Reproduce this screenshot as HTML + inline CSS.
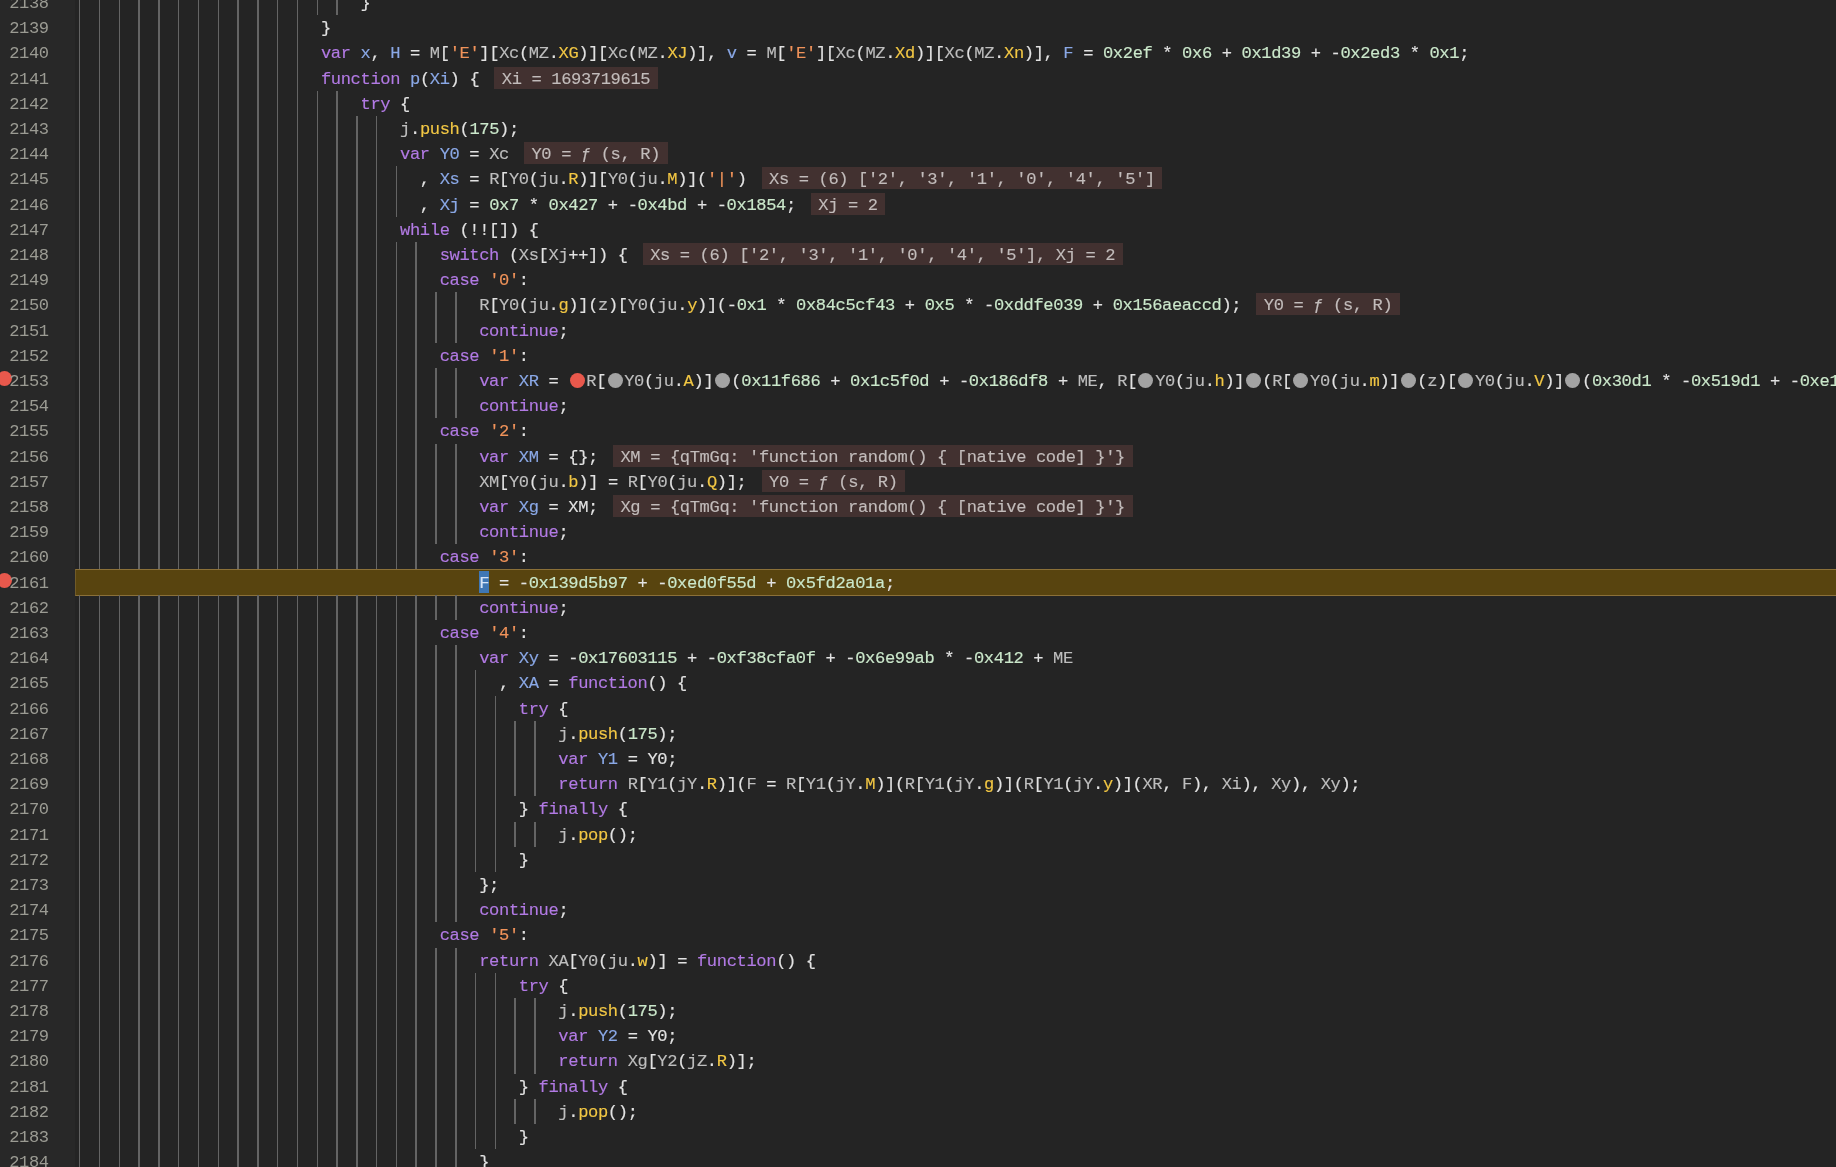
<!DOCTYPE html>
<html lang="en"><head><meta charset="utf-8"><title>Sources</title>
<style>
html,body{margin:0;padding:0;background:#242424;}
body{width:1836px;height:1167px;overflow:hidden;position:relative;font-family:"Liberation Mono", "DejaVu Sans Mono", monospace;font-size:17.1px;letter-spacing:-0.3652px;color:#e2e2e2;font-variant-ligatures:none;-webkit-text-stroke:0.15px;}
#gut{position:absolute;left:0;top:0;width:75px;height:1167px;background:#282828;}
.l{position:absolute;left:0;width:1836px;height:26px;line-height:25px;white-space:pre;}
.no{position:absolute;left:0;top:1px;width:48.765px;text-align:right;color:#9b9b93;-webkit-text-stroke:0;}
.c{position:absolute;left:83.5px;top:1px;}
#code{position:absolute;left:0;top:0;width:1836px;height:1167px;will-change:transform;}
.g{position:absolute;top:0;width:1px;height:100%;background:#646464;}
.g.b{width:2px;}
.v{color:#bebebe;} .k{color:#b27ae4;} .d{color:#8aa8e6;} .s{color:#f0935a;} .p{color:#f2c744;} .n{color:#cbe8cb;}
.w{margin-left:15px;padding:3px 7.5px 0;background:#423130;color:#c2bcbb;}
.bp{display:inline-block;width:15px;height:15px;border-radius:50%;background:#a3a3a3;margin:0 1.67px 0 1.4px;vertical-align:middle;position:relative;top:-0.7px;letter-spacing:0;}
.bp.r{background:#e8584c;}
.gbp{position:absolute;left:-3px;width:15px;height:15px;border-radius:50%;background:#e8584c;}
#hl{position:absolute;left:75px;right:0;background:#58440f;border-top:1px solid #8b7038;border-bottom:1px solid #8b7038;border-left:1px solid #705a28;box-sizing:border-box;}
.tk{background:#3f77b5;color:#d6e4f7;padding:3px 0 0;}
</style></head>
<body>
<div id="gut"></div>
<div id="code">
<div class="l" style="top:-10px;height:25px"><i class="g" style="left:79px"></i><i class="g" style="left:99px"></i><i class="g" style="left:119px"></i><i class="g b" style="left:138px"></i><i class="g b" style="left:158px"></i><i class="g" style="left:178px"></i><i class="g" style="left:198px"></i><i class="g" style="left:218px"></i><i class="g b" style="left:237px"></i><i class="g b" style="left:257px"></i><i class="g" style="left:277px"></i><i class="g" style="left:297px"></i><i class="g" style="left:317px"></i><i class="g b" style="left:336px"></i><span class="no">2138</span><span class="c">                            }</span></div>
<div class="l" style="top:15px;height:25px"><i class="g" style="left:79px"></i><i class="g" style="left:99px"></i><i class="g" style="left:119px"></i><i class="g b" style="left:138px"></i><i class="g b" style="left:158px"></i><i class="g" style="left:178px"></i><i class="g" style="left:198px"></i><i class="g" style="left:218px"></i><i class="g b" style="left:237px"></i><i class="g b" style="left:257px"></i><i class="g" style="left:277px"></i><i class="g" style="left:297px"></i><span class="no">2139</span><span class="c">                        }</span></div>
<div class="l" style="top:40px;height:26px"><i class="g" style="left:79px"></i><i class="g" style="left:99px"></i><i class="g" style="left:119px"></i><i class="g b" style="left:138px"></i><i class="g b" style="left:158px"></i><i class="g" style="left:178px"></i><i class="g" style="left:198px"></i><i class="g" style="left:218px"></i><i class="g b" style="left:237px"></i><i class="g b" style="left:257px"></i><i class="g" style="left:277px"></i><i class="g" style="left:297px"></i><span class="no">2140</span><span class="c">                        <span class="k">var</span> <span class="d">x</span>, <span class="d">H</span> = <span class="v">M</span>[<span class="s">'E'</span>][<span class="v">Xc</span>(<span class="v">MZ</span>.<span class="p">XG</span>)][<span class="v">Xc</span>(<span class="v">MZ</span>.<span class="p">XJ</span>)], <span class="d">v</span> = <span class="v">M</span>[<span class="s">'E'</span>][<span class="v">Xc</span>(<span class="v">MZ</span>.<span class="p">Xd</span>)][<span class="v">Xc</span>(<span class="v">MZ</span>.<span class="p">Xn</span>)], <span class="d">F</span> = <span class="n">0x2ef</span> * <span class="n">0x6</span> + <span class="n">0x1d39</span> + -<span class="n">0x2ed3</span> * <span class="n">0x1</span>;</span></div>
<div class="l" style="top:66px;height:25px"><i class="g" style="left:79px"></i><i class="g" style="left:99px"></i><i class="g" style="left:119px"></i><i class="g b" style="left:138px"></i><i class="g b" style="left:158px"></i><i class="g" style="left:178px"></i><i class="g" style="left:198px"></i><i class="g" style="left:218px"></i><i class="g b" style="left:237px"></i><i class="g b" style="left:257px"></i><i class="g" style="left:277px"></i><i class="g" style="left:297px"></i><span class="no">2141</span><span class="c">                        <span class="k">function</span> <span class="d">p</span>(<span class="d">Xi</span>) {<span class="w">Xi = 1693719615</span></span></div>
<div class="l" style="top:91px;height:25px"><i class="g" style="left:79px"></i><i class="g" style="left:99px"></i><i class="g" style="left:119px"></i><i class="g b" style="left:138px"></i><i class="g b" style="left:158px"></i><i class="g" style="left:178px"></i><i class="g" style="left:198px"></i><i class="g" style="left:218px"></i><i class="g b" style="left:237px"></i><i class="g b" style="left:257px"></i><i class="g" style="left:277px"></i><i class="g" style="left:297px"></i><i class="g" style="left:317px"></i><i class="g b" style="left:336px"></i><span class="no">2142</span><span class="c">                            <span class="k">try</span> {</span></div>
<div class="l" style="top:116px;height:25px"><i class="g" style="left:79px"></i><i class="g" style="left:99px"></i><i class="g" style="left:119px"></i><i class="g b" style="left:138px"></i><i class="g b" style="left:158px"></i><i class="g" style="left:178px"></i><i class="g" style="left:198px"></i><i class="g" style="left:218px"></i><i class="g b" style="left:237px"></i><i class="g b" style="left:257px"></i><i class="g" style="left:277px"></i><i class="g" style="left:297px"></i><i class="g" style="left:317px"></i><i class="g b" style="left:336px"></i><i class="g b" style="left:356px"></i><i class="g" style="left:376px"></i><span class="no">2143</span><span class="c">                                <span class="v">j</span>.<span class="p">push</span>(<span class="n">175</span>);</span></div>
<div class="l" style="top:141px;height:25px"><i class="g" style="left:79px"></i><i class="g" style="left:99px"></i><i class="g" style="left:119px"></i><i class="g b" style="left:138px"></i><i class="g b" style="left:158px"></i><i class="g" style="left:178px"></i><i class="g" style="left:198px"></i><i class="g" style="left:218px"></i><i class="g b" style="left:237px"></i><i class="g b" style="left:257px"></i><i class="g" style="left:277px"></i><i class="g" style="left:297px"></i><i class="g" style="left:317px"></i><i class="g b" style="left:336px"></i><i class="g b" style="left:356px"></i><i class="g" style="left:376px"></i><span class="no">2144</span><span class="c">                                <span class="k">var</span> <span class="d">Y0</span> = <span class="v">Xc</span><span class="w">Y0 = ƒ (s, R)</span></span></div>
<div class="l" style="top:166px;height:26px"><i class="g" style="left:79px"></i><i class="g" style="left:99px"></i><i class="g" style="left:119px"></i><i class="g b" style="left:138px"></i><i class="g b" style="left:158px"></i><i class="g" style="left:178px"></i><i class="g" style="left:198px"></i><i class="g" style="left:218px"></i><i class="g b" style="left:237px"></i><i class="g b" style="left:257px"></i><i class="g" style="left:277px"></i><i class="g" style="left:297px"></i><i class="g" style="left:317px"></i><i class="g b" style="left:336px"></i><i class="g b" style="left:356px"></i><i class="g" style="left:376px"></i><i class="g" style="left:396px"></i><span class="no">2145</span><span class="c">                                  , <span class="d">Xs</span> = <span class="v">R</span>[<span class="v">Y0</span>(<span class="v">ju</span>.<span class="p">R</span>)][<span class="v">Y0</span>(<span class="v">ju</span>.<span class="p">M</span>)](<span class="s">'|'</span>)<span class="w">Xs = (6) ['2', '3', '1', '0', '4', '5']</span></span></div>
<div class="l" style="top:192px;height:25px"><i class="g" style="left:79px"></i><i class="g" style="left:99px"></i><i class="g" style="left:119px"></i><i class="g b" style="left:138px"></i><i class="g b" style="left:158px"></i><i class="g" style="left:178px"></i><i class="g" style="left:198px"></i><i class="g" style="left:218px"></i><i class="g b" style="left:237px"></i><i class="g b" style="left:257px"></i><i class="g" style="left:277px"></i><i class="g" style="left:297px"></i><i class="g" style="left:317px"></i><i class="g b" style="left:336px"></i><i class="g b" style="left:356px"></i><i class="g" style="left:376px"></i><i class="g" style="left:396px"></i><span class="no">2146</span><span class="c">                                  , <span class="d">Xj</span> = <span class="n">0x7</span> * <span class="n">0x427</span> + -<span class="n">0x4bd</span> + -<span class="n">0x1854</span>;<span class="w">Xj = 2</span></span></div>
<div class="l" style="top:217px;height:25px"><i class="g" style="left:79px"></i><i class="g" style="left:99px"></i><i class="g" style="left:119px"></i><i class="g b" style="left:138px"></i><i class="g b" style="left:158px"></i><i class="g" style="left:178px"></i><i class="g" style="left:198px"></i><i class="g" style="left:218px"></i><i class="g b" style="left:237px"></i><i class="g b" style="left:257px"></i><i class="g" style="left:277px"></i><i class="g" style="left:297px"></i><i class="g" style="left:317px"></i><i class="g b" style="left:336px"></i><i class="g b" style="left:356px"></i><i class="g" style="left:376px"></i><span class="no">2147</span><span class="c">                                <span class="k">while</span> (!![]) {</span></div>
<div class="l" style="top:242px;height:25px"><i class="g" style="left:79px"></i><i class="g" style="left:99px"></i><i class="g" style="left:119px"></i><i class="g b" style="left:138px"></i><i class="g b" style="left:158px"></i><i class="g" style="left:178px"></i><i class="g" style="left:198px"></i><i class="g" style="left:218px"></i><i class="g b" style="left:237px"></i><i class="g b" style="left:257px"></i><i class="g" style="left:277px"></i><i class="g" style="left:297px"></i><i class="g" style="left:317px"></i><i class="g b" style="left:336px"></i><i class="g b" style="left:356px"></i><i class="g" style="left:376px"></i><i class="g" style="left:396px"></i><i class="g b" style="left:415px"></i><span class="no">2148</span><span class="c">                                    <span class="k">switch</span> (<span class="v">Xs</span>[<span class="v">Xj</span>++]) {<span class="w">Xs = (6) ['2', '3', '1', '0', '4', '5'], Xj = 2</span></span></div>
<div class="l" style="top:267px;height:25px"><i class="g" style="left:79px"></i><i class="g" style="left:99px"></i><i class="g" style="left:119px"></i><i class="g b" style="left:138px"></i><i class="g b" style="left:158px"></i><i class="g" style="left:178px"></i><i class="g" style="left:198px"></i><i class="g" style="left:218px"></i><i class="g b" style="left:237px"></i><i class="g b" style="left:257px"></i><i class="g" style="left:277px"></i><i class="g" style="left:297px"></i><i class="g" style="left:317px"></i><i class="g b" style="left:336px"></i><i class="g b" style="left:356px"></i><i class="g" style="left:376px"></i><i class="g" style="left:396px"></i><i class="g b" style="left:415px"></i><span class="no">2149</span><span class="c">                                    <span class="k">case</span> <span class="s">'0'</span>:</span></div>
<div class="l" style="top:292px;height:26px"><i class="g" style="left:79px"></i><i class="g" style="left:99px"></i><i class="g" style="left:119px"></i><i class="g b" style="left:138px"></i><i class="g b" style="left:158px"></i><i class="g" style="left:178px"></i><i class="g" style="left:198px"></i><i class="g" style="left:218px"></i><i class="g b" style="left:237px"></i><i class="g b" style="left:257px"></i><i class="g" style="left:277px"></i><i class="g" style="left:297px"></i><i class="g" style="left:317px"></i><i class="g b" style="left:336px"></i><i class="g b" style="left:356px"></i><i class="g" style="left:376px"></i><i class="g" style="left:396px"></i><i class="g b" style="left:415px"></i><i class="g b" style="left:435px"></i><i class="g b" style="left:455px"></i><span class="no">2150</span><span class="c">                                        <span class="v">R</span>[<span class="v">Y0</span>(<span class="v">ju</span>.<span class="p">g</span>)](<span class="v">z</span>)[<span class="v">Y0</span>(<span class="v">ju</span>.<span class="p">y</span>)](-<span class="n">0x1</span> * <span class="n">0x84c5cf43</span> + <span class="n">0x5</span> * -<span class="n">0xddfe039</span> + <span class="n">0x156aeaccd</span>);<span class="w">Y0 = ƒ (s, R)</span></span></div>
<div class="l" style="top:318px;height:25px"><i class="g" style="left:79px"></i><i class="g" style="left:99px"></i><i class="g" style="left:119px"></i><i class="g b" style="left:138px"></i><i class="g b" style="left:158px"></i><i class="g" style="left:178px"></i><i class="g" style="left:198px"></i><i class="g" style="left:218px"></i><i class="g b" style="left:237px"></i><i class="g b" style="left:257px"></i><i class="g" style="left:277px"></i><i class="g" style="left:297px"></i><i class="g" style="left:317px"></i><i class="g b" style="left:336px"></i><i class="g b" style="left:356px"></i><i class="g" style="left:376px"></i><i class="g" style="left:396px"></i><i class="g b" style="left:415px"></i><i class="g b" style="left:435px"></i><i class="g b" style="left:455px"></i><span class="no">2151</span><span class="c">                                        <span class="k">continue</span>;</span></div>
<div class="l" style="top:343px;height:25px"><i class="g" style="left:79px"></i><i class="g" style="left:99px"></i><i class="g" style="left:119px"></i><i class="g b" style="left:138px"></i><i class="g b" style="left:158px"></i><i class="g" style="left:178px"></i><i class="g" style="left:198px"></i><i class="g" style="left:218px"></i><i class="g b" style="left:237px"></i><i class="g b" style="left:257px"></i><i class="g" style="left:277px"></i><i class="g" style="left:297px"></i><i class="g" style="left:317px"></i><i class="g b" style="left:336px"></i><i class="g b" style="left:356px"></i><i class="g" style="left:376px"></i><i class="g" style="left:396px"></i><i class="g b" style="left:415px"></i><span class="no">2152</span><span class="c">                                    <span class="k">case</span> <span class="s">'1'</span>:</span></div>
<div class="l" style="top:368px;height:25px"><i class="g" style="left:79px"></i><i class="g" style="left:99px"></i><i class="g" style="left:119px"></i><i class="g b" style="left:138px"></i><i class="g b" style="left:158px"></i><i class="g" style="left:178px"></i><i class="g" style="left:198px"></i><i class="g" style="left:218px"></i><i class="g b" style="left:237px"></i><i class="g b" style="left:257px"></i><i class="g" style="left:277px"></i><i class="g" style="left:297px"></i><i class="g" style="left:317px"></i><i class="g b" style="left:336px"></i><i class="g b" style="left:356px"></i><i class="g" style="left:376px"></i><i class="g" style="left:396px"></i><i class="g b" style="left:415px"></i><i class="g b" style="left:435px"></i><i class="g b" style="left:455px"></i><i class="gbp" style="top:3px"></i><span class="no">2153</span><span class="c">                                        <span class="k">var</span> <span class="d">XR</span> = <i class="bp r"></i><span class="v">R</span>[<i class="bp"></i><span class="v">Y0</span>(<span class="v">ju</span>.<span class="p">A</span>)]<i class="bp"></i>(<span class="n">0x11f686</span> + <span class="n">0x1c5f0d</span> + -<span class="n">0x186df8</span> + <span class="v">ME</span>, <span class="v">R</span>[<i class="bp"></i><span class="v">Y0</span>(<span class="v">ju</span>.<span class="p">h</span>)]<i class="bp"></i>(<span class="v">R</span>[<i class="bp"></i><span class="v">Y0</span>(<span class="v">ju</span>.<span class="p">m</span>)]<i class="bp"></i>(<span class="v">z</span>)[<i class="bp"></i><span class="v">Y0</span>(<span class="v">ju</span>.<span class="p">V</span>)]<i class="bp"></i>(<span class="n">0x30d1</span> * -<span class="n">0x519d1</span> + -<span class="n">0xe17</span> + <span class="n">0x1a3c2e</span>), <span class="v">XR</span>)), <span class="v">Xi</span>);</span></div>
<div class="l" style="top:393px;height:25px"><i class="g" style="left:79px"></i><i class="g" style="left:99px"></i><i class="g" style="left:119px"></i><i class="g b" style="left:138px"></i><i class="g b" style="left:158px"></i><i class="g" style="left:178px"></i><i class="g" style="left:198px"></i><i class="g" style="left:218px"></i><i class="g b" style="left:237px"></i><i class="g b" style="left:257px"></i><i class="g" style="left:277px"></i><i class="g" style="left:297px"></i><i class="g" style="left:317px"></i><i class="g b" style="left:336px"></i><i class="g b" style="left:356px"></i><i class="g" style="left:376px"></i><i class="g" style="left:396px"></i><i class="g b" style="left:415px"></i><i class="g b" style="left:435px"></i><i class="g b" style="left:455px"></i><span class="no">2154</span><span class="c">                                        <span class="k">continue</span>;</span></div>
<div class="l" style="top:418px;height:26px"><i class="g" style="left:79px"></i><i class="g" style="left:99px"></i><i class="g" style="left:119px"></i><i class="g b" style="left:138px"></i><i class="g b" style="left:158px"></i><i class="g" style="left:178px"></i><i class="g" style="left:198px"></i><i class="g" style="left:218px"></i><i class="g b" style="left:237px"></i><i class="g b" style="left:257px"></i><i class="g" style="left:277px"></i><i class="g" style="left:297px"></i><i class="g" style="left:317px"></i><i class="g b" style="left:336px"></i><i class="g b" style="left:356px"></i><i class="g" style="left:376px"></i><i class="g" style="left:396px"></i><i class="g b" style="left:415px"></i><span class="no">2155</span><span class="c">                                    <span class="k">case</span> <span class="s">'2'</span>:</span></div>
<div class="l" style="top:444px;height:25px"><i class="g" style="left:79px"></i><i class="g" style="left:99px"></i><i class="g" style="left:119px"></i><i class="g b" style="left:138px"></i><i class="g b" style="left:158px"></i><i class="g" style="left:178px"></i><i class="g" style="left:198px"></i><i class="g" style="left:218px"></i><i class="g b" style="left:237px"></i><i class="g b" style="left:257px"></i><i class="g" style="left:277px"></i><i class="g" style="left:297px"></i><i class="g" style="left:317px"></i><i class="g b" style="left:336px"></i><i class="g b" style="left:356px"></i><i class="g" style="left:376px"></i><i class="g" style="left:396px"></i><i class="g b" style="left:415px"></i><i class="g b" style="left:435px"></i><i class="g b" style="left:455px"></i><span class="no">2156</span><span class="c">                                        <span class="k">var</span> <span class="d">XM</span> = {};<span class="w">XM = {qTmGq: 'function random() { [native code] }'}</span></span></div>
<div class="l" style="top:469px;height:25px"><i class="g" style="left:79px"></i><i class="g" style="left:99px"></i><i class="g" style="left:119px"></i><i class="g b" style="left:138px"></i><i class="g b" style="left:158px"></i><i class="g" style="left:178px"></i><i class="g" style="left:198px"></i><i class="g" style="left:218px"></i><i class="g b" style="left:237px"></i><i class="g b" style="left:257px"></i><i class="g" style="left:277px"></i><i class="g" style="left:297px"></i><i class="g" style="left:317px"></i><i class="g b" style="left:336px"></i><i class="g b" style="left:356px"></i><i class="g" style="left:376px"></i><i class="g" style="left:396px"></i><i class="g b" style="left:415px"></i><i class="g b" style="left:435px"></i><i class="g b" style="left:455px"></i><span class="no">2157</span><span class="c">                                        <span class="v">XM</span>[<span class="v">Y0</span>(<span class="v">ju</span>.<span class="p">b</span>)] = <span class="v">R</span>[<span class="v">Y0</span>(<span class="v">ju</span>.<span class="p">Q</span>)];<span class="w">Y0 = ƒ (s, R)</span></span></div>
<div class="l" style="top:494px;height:25px"><i class="g" style="left:79px"></i><i class="g" style="left:99px"></i><i class="g" style="left:119px"></i><i class="g b" style="left:138px"></i><i class="g b" style="left:158px"></i><i class="g" style="left:178px"></i><i class="g" style="left:198px"></i><i class="g" style="left:218px"></i><i class="g b" style="left:237px"></i><i class="g b" style="left:257px"></i><i class="g" style="left:277px"></i><i class="g" style="left:297px"></i><i class="g" style="left:317px"></i><i class="g b" style="left:336px"></i><i class="g b" style="left:356px"></i><i class="g" style="left:376px"></i><i class="g" style="left:396px"></i><i class="g b" style="left:415px"></i><i class="g b" style="left:435px"></i><i class="g b" style="left:455px"></i><span class="no">2158</span><span class="c">                                        <span class="k">var</span> <span class="d">Xg</span> = XM;<span class="w">Xg = {qTmGq: 'function random() { [native code] }'}</span></span></div>
<div class="l" style="top:519px;height:25px"><i class="g" style="left:79px"></i><i class="g" style="left:99px"></i><i class="g" style="left:119px"></i><i class="g b" style="left:138px"></i><i class="g b" style="left:158px"></i><i class="g" style="left:178px"></i><i class="g" style="left:198px"></i><i class="g" style="left:218px"></i><i class="g b" style="left:237px"></i><i class="g b" style="left:257px"></i><i class="g" style="left:277px"></i><i class="g" style="left:297px"></i><i class="g" style="left:317px"></i><i class="g b" style="left:336px"></i><i class="g b" style="left:356px"></i><i class="g" style="left:376px"></i><i class="g" style="left:396px"></i><i class="g b" style="left:415px"></i><i class="g b" style="left:435px"></i><i class="g b" style="left:455px"></i><span class="no">2159</span><span class="c">                                        <span class="k">continue</span>;</span></div>
<div class="l" style="top:544px;height:26px"><i class="g" style="left:79px"></i><i class="g" style="left:99px"></i><i class="g" style="left:119px"></i><i class="g b" style="left:138px"></i><i class="g b" style="left:158px"></i><i class="g" style="left:178px"></i><i class="g" style="left:198px"></i><i class="g" style="left:218px"></i><i class="g b" style="left:237px"></i><i class="g b" style="left:257px"></i><i class="g" style="left:277px"></i><i class="g" style="left:297px"></i><i class="g" style="left:317px"></i><i class="g b" style="left:336px"></i><i class="g b" style="left:356px"></i><i class="g" style="left:376px"></i><i class="g" style="left:396px"></i><i class="g b" style="left:415px"></i><span class="no">2160</span><span class="c">                                    <span class="k">case</span> <span class="s">'3'</span>:</span></div>
<div id="hl" style="top:569px;height:27px"></div>
<div class="l" style="top:570px;height:25px"><i class="gbp" style="top:3px"></i><span class="no">2161</span><span class="c">                                        <span class="tk">F</span> = -<span class="n">0x139d5b97</span> + -<span class="n">0xed0f55d</span> + <span class="n">0x5fd2a01a</span>;</span></div>
<div class="l" style="top:595px;height:25px"><i class="g" style="left:79px"></i><i class="g" style="left:99px"></i><i class="g" style="left:119px"></i><i class="g b" style="left:138px"></i><i class="g b" style="left:158px"></i><i class="g" style="left:178px"></i><i class="g" style="left:198px"></i><i class="g" style="left:218px"></i><i class="g b" style="left:237px"></i><i class="g b" style="left:257px"></i><i class="g" style="left:277px"></i><i class="g" style="left:297px"></i><i class="g" style="left:317px"></i><i class="g b" style="left:336px"></i><i class="g b" style="left:356px"></i><i class="g" style="left:376px"></i><i class="g" style="left:396px"></i><i class="g b" style="left:415px"></i><i class="g b" style="left:435px"></i><i class="g b" style="left:455px"></i><span class="no">2162</span><span class="c">                                        <span class="k">continue</span>;</span></div>
<div class="l" style="top:620px;height:25px"><i class="g" style="left:79px"></i><i class="g" style="left:99px"></i><i class="g" style="left:119px"></i><i class="g b" style="left:138px"></i><i class="g b" style="left:158px"></i><i class="g" style="left:178px"></i><i class="g" style="left:198px"></i><i class="g" style="left:218px"></i><i class="g b" style="left:237px"></i><i class="g b" style="left:257px"></i><i class="g" style="left:277px"></i><i class="g" style="left:297px"></i><i class="g" style="left:317px"></i><i class="g b" style="left:336px"></i><i class="g b" style="left:356px"></i><i class="g" style="left:376px"></i><i class="g" style="left:396px"></i><i class="g b" style="left:415px"></i><span class="no">2163</span><span class="c">                                    <span class="k">case</span> <span class="s">'4'</span>:</span></div>
<div class="l" style="top:645px;height:25px"><i class="g" style="left:79px"></i><i class="g" style="left:99px"></i><i class="g" style="left:119px"></i><i class="g b" style="left:138px"></i><i class="g b" style="left:158px"></i><i class="g" style="left:178px"></i><i class="g" style="left:198px"></i><i class="g" style="left:218px"></i><i class="g b" style="left:237px"></i><i class="g b" style="left:257px"></i><i class="g" style="left:277px"></i><i class="g" style="left:297px"></i><i class="g" style="left:317px"></i><i class="g b" style="left:336px"></i><i class="g b" style="left:356px"></i><i class="g" style="left:376px"></i><i class="g" style="left:396px"></i><i class="g b" style="left:415px"></i><i class="g b" style="left:435px"></i><i class="g b" style="left:455px"></i><span class="no">2164</span><span class="c">                                        <span class="k">var</span> <span class="d">Xy</span> = -<span class="n">0x17603115</span> + -<span class="n">0xf38cfa0f</span> + -<span class="n">0x6e99ab</span> * -<span class="n">0x412</span> + <span class="v">ME</span></span></div>
<div class="l" style="top:670px;height:26px"><i class="g" style="left:79px"></i><i class="g" style="left:99px"></i><i class="g" style="left:119px"></i><i class="g b" style="left:138px"></i><i class="g b" style="left:158px"></i><i class="g" style="left:178px"></i><i class="g" style="left:198px"></i><i class="g" style="left:218px"></i><i class="g b" style="left:237px"></i><i class="g b" style="left:257px"></i><i class="g" style="left:277px"></i><i class="g" style="left:297px"></i><i class="g" style="left:317px"></i><i class="g b" style="left:336px"></i><i class="g b" style="left:356px"></i><i class="g" style="left:376px"></i><i class="g" style="left:396px"></i><i class="g b" style="left:415px"></i><i class="g b" style="left:435px"></i><i class="g b" style="left:455px"></i><i class="g" style="left:475px"></i><span class="no">2165</span><span class="c">                                          , <span class="d">XA</span> = <span class="k">function</span>() {</span></div>
<div class="l" style="top:696px;height:25px"><i class="g" style="left:79px"></i><i class="g" style="left:99px"></i><i class="g" style="left:119px"></i><i class="g b" style="left:138px"></i><i class="g b" style="left:158px"></i><i class="g" style="left:178px"></i><i class="g" style="left:198px"></i><i class="g" style="left:218px"></i><i class="g b" style="left:237px"></i><i class="g b" style="left:257px"></i><i class="g" style="left:277px"></i><i class="g" style="left:297px"></i><i class="g" style="left:317px"></i><i class="g b" style="left:336px"></i><i class="g b" style="left:356px"></i><i class="g" style="left:376px"></i><i class="g" style="left:396px"></i><i class="g b" style="left:415px"></i><i class="g b" style="left:435px"></i><i class="g b" style="left:455px"></i><i class="g" style="left:475px"></i><i class="g" style="left:495px"></i><span class="no">2166</span><span class="c">                                            <span class="k">try</span> {</span></div>
<div class="l" style="top:721px;height:25px"><i class="g" style="left:79px"></i><i class="g" style="left:99px"></i><i class="g" style="left:119px"></i><i class="g b" style="left:138px"></i><i class="g b" style="left:158px"></i><i class="g" style="left:178px"></i><i class="g" style="left:198px"></i><i class="g" style="left:218px"></i><i class="g b" style="left:237px"></i><i class="g b" style="left:257px"></i><i class="g" style="left:277px"></i><i class="g" style="left:297px"></i><i class="g" style="left:317px"></i><i class="g b" style="left:336px"></i><i class="g b" style="left:356px"></i><i class="g" style="left:376px"></i><i class="g" style="left:396px"></i><i class="g b" style="left:415px"></i><i class="g b" style="left:435px"></i><i class="g b" style="left:455px"></i><i class="g" style="left:475px"></i><i class="g" style="left:495px"></i><i class="g b" style="left:514px"></i><i class="g b" style="left:534px"></i><span class="no">2167</span><span class="c">                                                <span class="v">j</span>.<span class="p">push</span>(<span class="n">175</span>);</span></div>
<div class="l" style="top:746px;height:25px"><i class="g" style="left:79px"></i><i class="g" style="left:99px"></i><i class="g" style="left:119px"></i><i class="g b" style="left:138px"></i><i class="g b" style="left:158px"></i><i class="g" style="left:178px"></i><i class="g" style="left:198px"></i><i class="g" style="left:218px"></i><i class="g b" style="left:237px"></i><i class="g b" style="left:257px"></i><i class="g" style="left:277px"></i><i class="g" style="left:297px"></i><i class="g" style="left:317px"></i><i class="g b" style="left:336px"></i><i class="g b" style="left:356px"></i><i class="g" style="left:376px"></i><i class="g" style="left:396px"></i><i class="g b" style="left:415px"></i><i class="g b" style="left:435px"></i><i class="g b" style="left:455px"></i><i class="g" style="left:475px"></i><i class="g" style="left:495px"></i><i class="g b" style="left:514px"></i><i class="g b" style="left:534px"></i><span class="no">2168</span><span class="c">                                                <span class="k">var</span> <span class="d">Y1</span> = Y0;</span></div>
<div class="l" style="top:771px;height:25px"><i class="g" style="left:79px"></i><i class="g" style="left:99px"></i><i class="g" style="left:119px"></i><i class="g b" style="left:138px"></i><i class="g b" style="left:158px"></i><i class="g" style="left:178px"></i><i class="g" style="left:198px"></i><i class="g" style="left:218px"></i><i class="g b" style="left:237px"></i><i class="g b" style="left:257px"></i><i class="g" style="left:277px"></i><i class="g" style="left:297px"></i><i class="g" style="left:317px"></i><i class="g b" style="left:336px"></i><i class="g b" style="left:356px"></i><i class="g" style="left:376px"></i><i class="g" style="left:396px"></i><i class="g b" style="left:415px"></i><i class="g b" style="left:435px"></i><i class="g b" style="left:455px"></i><i class="g" style="left:475px"></i><i class="g" style="left:495px"></i><i class="g b" style="left:514px"></i><i class="g b" style="left:534px"></i><span class="no">2169</span><span class="c">                                                <span class="k">return</span> <span class="v">R</span>[<span class="v">Y1</span>(<span class="v">jY</span>.<span class="p">R</span>)](<span class="v">F</span> = <span class="v">R</span>[<span class="v">Y1</span>(<span class="v">jY</span>.<span class="p">M</span>)](<span class="v">R</span>[<span class="v">Y1</span>(<span class="v">jY</span>.<span class="p">g</span>)](<span class="v">R</span>[<span class="v">Y1</span>(<span class="v">jY</span>.<span class="p">y</span>)](<span class="v">XR</span>, <span class="v">F</span>), <span class="v">Xi</span>), <span class="v">Xy</span>), <span class="v">Xy</span>);</span></div>
<div class="l" style="top:796px;height:26px"><i class="g" style="left:79px"></i><i class="g" style="left:99px"></i><i class="g" style="left:119px"></i><i class="g b" style="left:138px"></i><i class="g b" style="left:158px"></i><i class="g" style="left:178px"></i><i class="g" style="left:198px"></i><i class="g" style="left:218px"></i><i class="g b" style="left:237px"></i><i class="g b" style="left:257px"></i><i class="g" style="left:277px"></i><i class="g" style="left:297px"></i><i class="g" style="left:317px"></i><i class="g b" style="left:336px"></i><i class="g b" style="left:356px"></i><i class="g" style="left:376px"></i><i class="g" style="left:396px"></i><i class="g b" style="left:415px"></i><i class="g b" style="left:435px"></i><i class="g b" style="left:455px"></i><i class="g" style="left:475px"></i><i class="g" style="left:495px"></i><span class="no">2170</span><span class="c">                                            } <span class="k">finally</span> {</span></div>
<div class="l" style="top:822px;height:25px"><i class="g" style="left:79px"></i><i class="g" style="left:99px"></i><i class="g" style="left:119px"></i><i class="g b" style="left:138px"></i><i class="g b" style="left:158px"></i><i class="g" style="left:178px"></i><i class="g" style="left:198px"></i><i class="g" style="left:218px"></i><i class="g b" style="left:237px"></i><i class="g b" style="left:257px"></i><i class="g" style="left:277px"></i><i class="g" style="left:297px"></i><i class="g" style="left:317px"></i><i class="g b" style="left:336px"></i><i class="g b" style="left:356px"></i><i class="g" style="left:376px"></i><i class="g" style="left:396px"></i><i class="g b" style="left:415px"></i><i class="g b" style="left:435px"></i><i class="g b" style="left:455px"></i><i class="g" style="left:475px"></i><i class="g" style="left:495px"></i><i class="g b" style="left:514px"></i><i class="g b" style="left:534px"></i><span class="no">2171</span><span class="c">                                                <span class="v">j</span>.<span class="p">pop</span>();</span></div>
<div class="l" style="top:847px;height:25px"><i class="g" style="left:79px"></i><i class="g" style="left:99px"></i><i class="g" style="left:119px"></i><i class="g b" style="left:138px"></i><i class="g b" style="left:158px"></i><i class="g" style="left:178px"></i><i class="g" style="left:198px"></i><i class="g" style="left:218px"></i><i class="g b" style="left:237px"></i><i class="g b" style="left:257px"></i><i class="g" style="left:277px"></i><i class="g" style="left:297px"></i><i class="g" style="left:317px"></i><i class="g b" style="left:336px"></i><i class="g b" style="left:356px"></i><i class="g" style="left:376px"></i><i class="g" style="left:396px"></i><i class="g b" style="left:415px"></i><i class="g b" style="left:435px"></i><i class="g b" style="left:455px"></i><i class="g" style="left:475px"></i><i class="g" style="left:495px"></i><span class="no">2172</span><span class="c">                                            }</span></div>
<div class="l" style="top:872px;height:25px"><i class="g" style="left:79px"></i><i class="g" style="left:99px"></i><i class="g" style="left:119px"></i><i class="g b" style="left:138px"></i><i class="g b" style="left:158px"></i><i class="g" style="left:178px"></i><i class="g" style="left:198px"></i><i class="g" style="left:218px"></i><i class="g b" style="left:237px"></i><i class="g b" style="left:257px"></i><i class="g" style="left:277px"></i><i class="g" style="left:297px"></i><i class="g" style="left:317px"></i><i class="g b" style="left:336px"></i><i class="g b" style="left:356px"></i><i class="g" style="left:376px"></i><i class="g" style="left:396px"></i><i class="g b" style="left:415px"></i><i class="g b" style="left:435px"></i><i class="g b" style="left:455px"></i><span class="no">2173</span><span class="c">                                        };</span></div>
<div class="l" style="top:897px;height:25px"><i class="g" style="left:79px"></i><i class="g" style="left:99px"></i><i class="g" style="left:119px"></i><i class="g b" style="left:138px"></i><i class="g b" style="left:158px"></i><i class="g" style="left:178px"></i><i class="g" style="left:198px"></i><i class="g" style="left:218px"></i><i class="g b" style="left:237px"></i><i class="g b" style="left:257px"></i><i class="g" style="left:277px"></i><i class="g" style="left:297px"></i><i class="g" style="left:317px"></i><i class="g b" style="left:336px"></i><i class="g b" style="left:356px"></i><i class="g" style="left:376px"></i><i class="g" style="left:396px"></i><i class="g b" style="left:415px"></i><i class="g b" style="left:435px"></i><i class="g b" style="left:455px"></i><span class="no">2174</span><span class="c">                                        <span class="k">continue</span>;</span></div>
<div class="l" style="top:922px;height:26px"><i class="g" style="left:79px"></i><i class="g" style="left:99px"></i><i class="g" style="left:119px"></i><i class="g b" style="left:138px"></i><i class="g b" style="left:158px"></i><i class="g" style="left:178px"></i><i class="g" style="left:198px"></i><i class="g" style="left:218px"></i><i class="g b" style="left:237px"></i><i class="g b" style="left:257px"></i><i class="g" style="left:277px"></i><i class="g" style="left:297px"></i><i class="g" style="left:317px"></i><i class="g b" style="left:336px"></i><i class="g b" style="left:356px"></i><i class="g" style="left:376px"></i><i class="g" style="left:396px"></i><i class="g b" style="left:415px"></i><span class="no">2175</span><span class="c">                                    <span class="k">case</span> <span class="s">'5'</span>:</span></div>
<div class="l" style="top:948px;height:25px"><i class="g" style="left:79px"></i><i class="g" style="left:99px"></i><i class="g" style="left:119px"></i><i class="g b" style="left:138px"></i><i class="g b" style="left:158px"></i><i class="g" style="left:178px"></i><i class="g" style="left:198px"></i><i class="g" style="left:218px"></i><i class="g b" style="left:237px"></i><i class="g b" style="left:257px"></i><i class="g" style="left:277px"></i><i class="g" style="left:297px"></i><i class="g" style="left:317px"></i><i class="g b" style="left:336px"></i><i class="g b" style="left:356px"></i><i class="g" style="left:376px"></i><i class="g" style="left:396px"></i><i class="g b" style="left:415px"></i><i class="g b" style="left:435px"></i><i class="g b" style="left:455px"></i><span class="no">2176</span><span class="c">                                        <span class="k">return</span> <span class="v">XA</span>[<span class="v">Y0</span>(<span class="v">ju</span>.<span class="p">w</span>)] = <span class="k">function</span>() {</span></div>
<div class="l" style="top:973px;height:25px"><i class="g" style="left:79px"></i><i class="g" style="left:99px"></i><i class="g" style="left:119px"></i><i class="g b" style="left:138px"></i><i class="g b" style="left:158px"></i><i class="g" style="left:178px"></i><i class="g" style="left:198px"></i><i class="g" style="left:218px"></i><i class="g b" style="left:237px"></i><i class="g b" style="left:257px"></i><i class="g" style="left:277px"></i><i class="g" style="left:297px"></i><i class="g" style="left:317px"></i><i class="g b" style="left:336px"></i><i class="g b" style="left:356px"></i><i class="g" style="left:376px"></i><i class="g" style="left:396px"></i><i class="g b" style="left:415px"></i><i class="g b" style="left:435px"></i><i class="g b" style="left:455px"></i><i class="g" style="left:475px"></i><i class="g" style="left:495px"></i><span class="no">2177</span><span class="c">                                            <span class="k">try</span> {</span></div>
<div class="l" style="top:998px;height:25px"><i class="g" style="left:79px"></i><i class="g" style="left:99px"></i><i class="g" style="left:119px"></i><i class="g b" style="left:138px"></i><i class="g b" style="left:158px"></i><i class="g" style="left:178px"></i><i class="g" style="left:198px"></i><i class="g" style="left:218px"></i><i class="g b" style="left:237px"></i><i class="g b" style="left:257px"></i><i class="g" style="left:277px"></i><i class="g" style="left:297px"></i><i class="g" style="left:317px"></i><i class="g b" style="left:336px"></i><i class="g b" style="left:356px"></i><i class="g" style="left:376px"></i><i class="g" style="left:396px"></i><i class="g b" style="left:415px"></i><i class="g b" style="left:435px"></i><i class="g b" style="left:455px"></i><i class="g" style="left:475px"></i><i class="g" style="left:495px"></i><i class="g b" style="left:514px"></i><i class="g b" style="left:534px"></i><span class="no">2178</span><span class="c">                                                <span class="v">j</span>.<span class="p">push</span>(<span class="n">175</span>);</span></div>
<div class="l" style="top:1023px;height:25px"><i class="g" style="left:79px"></i><i class="g" style="left:99px"></i><i class="g" style="left:119px"></i><i class="g b" style="left:138px"></i><i class="g b" style="left:158px"></i><i class="g" style="left:178px"></i><i class="g" style="left:198px"></i><i class="g" style="left:218px"></i><i class="g b" style="left:237px"></i><i class="g b" style="left:257px"></i><i class="g" style="left:277px"></i><i class="g" style="left:297px"></i><i class="g" style="left:317px"></i><i class="g b" style="left:336px"></i><i class="g b" style="left:356px"></i><i class="g" style="left:376px"></i><i class="g" style="left:396px"></i><i class="g b" style="left:415px"></i><i class="g b" style="left:435px"></i><i class="g b" style="left:455px"></i><i class="g" style="left:475px"></i><i class="g" style="left:495px"></i><i class="g b" style="left:514px"></i><i class="g b" style="left:534px"></i><span class="no">2179</span><span class="c">                                                <span class="k">var</span> <span class="d">Y2</span> = Y0;</span></div>
<div class="l" style="top:1048px;height:26px"><i class="g" style="left:79px"></i><i class="g" style="left:99px"></i><i class="g" style="left:119px"></i><i class="g b" style="left:138px"></i><i class="g b" style="left:158px"></i><i class="g" style="left:178px"></i><i class="g" style="left:198px"></i><i class="g" style="left:218px"></i><i class="g b" style="left:237px"></i><i class="g b" style="left:257px"></i><i class="g" style="left:277px"></i><i class="g" style="left:297px"></i><i class="g" style="left:317px"></i><i class="g b" style="left:336px"></i><i class="g b" style="left:356px"></i><i class="g" style="left:376px"></i><i class="g" style="left:396px"></i><i class="g b" style="left:415px"></i><i class="g b" style="left:435px"></i><i class="g b" style="left:455px"></i><i class="g" style="left:475px"></i><i class="g" style="left:495px"></i><i class="g b" style="left:514px"></i><i class="g b" style="left:534px"></i><span class="no">2180</span><span class="c">                                                <span class="k">return</span> <span class="v">Xg</span>[<span class="v">Y2</span>(<span class="v">jZ</span>.<span class="p">R</span>)];</span></div>
<div class="l" style="top:1074px;height:25px"><i class="g" style="left:79px"></i><i class="g" style="left:99px"></i><i class="g" style="left:119px"></i><i class="g b" style="left:138px"></i><i class="g b" style="left:158px"></i><i class="g" style="left:178px"></i><i class="g" style="left:198px"></i><i class="g" style="left:218px"></i><i class="g b" style="left:237px"></i><i class="g b" style="left:257px"></i><i class="g" style="left:277px"></i><i class="g" style="left:297px"></i><i class="g" style="left:317px"></i><i class="g b" style="left:336px"></i><i class="g b" style="left:356px"></i><i class="g" style="left:376px"></i><i class="g" style="left:396px"></i><i class="g b" style="left:415px"></i><i class="g b" style="left:435px"></i><i class="g b" style="left:455px"></i><i class="g" style="left:475px"></i><i class="g" style="left:495px"></i><span class="no">2181</span><span class="c">                                            } <span class="k">finally</span> {</span></div>
<div class="l" style="top:1099px;height:25px"><i class="g" style="left:79px"></i><i class="g" style="left:99px"></i><i class="g" style="left:119px"></i><i class="g b" style="left:138px"></i><i class="g b" style="left:158px"></i><i class="g" style="left:178px"></i><i class="g" style="left:198px"></i><i class="g" style="left:218px"></i><i class="g b" style="left:237px"></i><i class="g b" style="left:257px"></i><i class="g" style="left:277px"></i><i class="g" style="left:297px"></i><i class="g" style="left:317px"></i><i class="g b" style="left:336px"></i><i class="g b" style="left:356px"></i><i class="g" style="left:376px"></i><i class="g" style="left:396px"></i><i class="g b" style="left:415px"></i><i class="g b" style="left:435px"></i><i class="g b" style="left:455px"></i><i class="g" style="left:475px"></i><i class="g" style="left:495px"></i><i class="g b" style="left:514px"></i><i class="g b" style="left:534px"></i><span class="no">2182</span><span class="c">                                                <span class="v">j</span>.<span class="p">pop</span>();</span></div>
<div class="l" style="top:1124px;height:25px"><i class="g" style="left:79px"></i><i class="g" style="left:99px"></i><i class="g" style="left:119px"></i><i class="g b" style="left:138px"></i><i class="g b" style="left:158px"></i><i class="g" style="left:178px"></i><i class="g" style="left:198px"></i><i class="g" style="left:218px"></i><i class="g b" style="left:237px"></i><i class="g b" style="left:257px"></i><i class="g" style="left:277px"></i><i class="g" style="left:297px"></i><i class="g" style="left:317px"></i><i class="g b" style="left:336px"></i><i class="g b" style="left:356px"></i><i class="g" style="left:376px"></i><i class="g" style="left:396px"></i><i class="g b" style="left:415px"></i><i class="g b" style="left:435px"></i><i class="g b" style="left:455px"></i><i class="g" style="left:475px"></i><i class="g" style="left:495px"></i><span class="no">2183</span><span class="c">                                            }</span></div>
<div class="l" style="top:1149px;height:25px"><i class="g" style="left:79px"></i><i class="g" style="left:99px"></i><i class="g" style="left:119px"></i><i class="g b" style="left:138px"></i><i class="g b" style="left:158px"></i><i class="g" style="left:178px"></i><i class="g" style="left:198px"></i><i class="g" style="left:218px"></i><i class="g b" style="left:237px"></i><i class="g b" style="left:257px"></i><i class="g" style="left:277px"></i><i class="g" style="left:297px"></i><i class="g" style="left:317px"></i><i class="g b" style="left:336px"></i><i class="g b" style="left:356px"></i><i class="g" style="left:376px"></i><i class="g" style="left:396px"></i><i class="g b" style="left:415px"></i><i class="g b" style="left:435px"></i><i class="g b" style="left:455px"></i><span class="no">2184</span><span class="c">                                        }</span></div>
</div>
</body></html>
